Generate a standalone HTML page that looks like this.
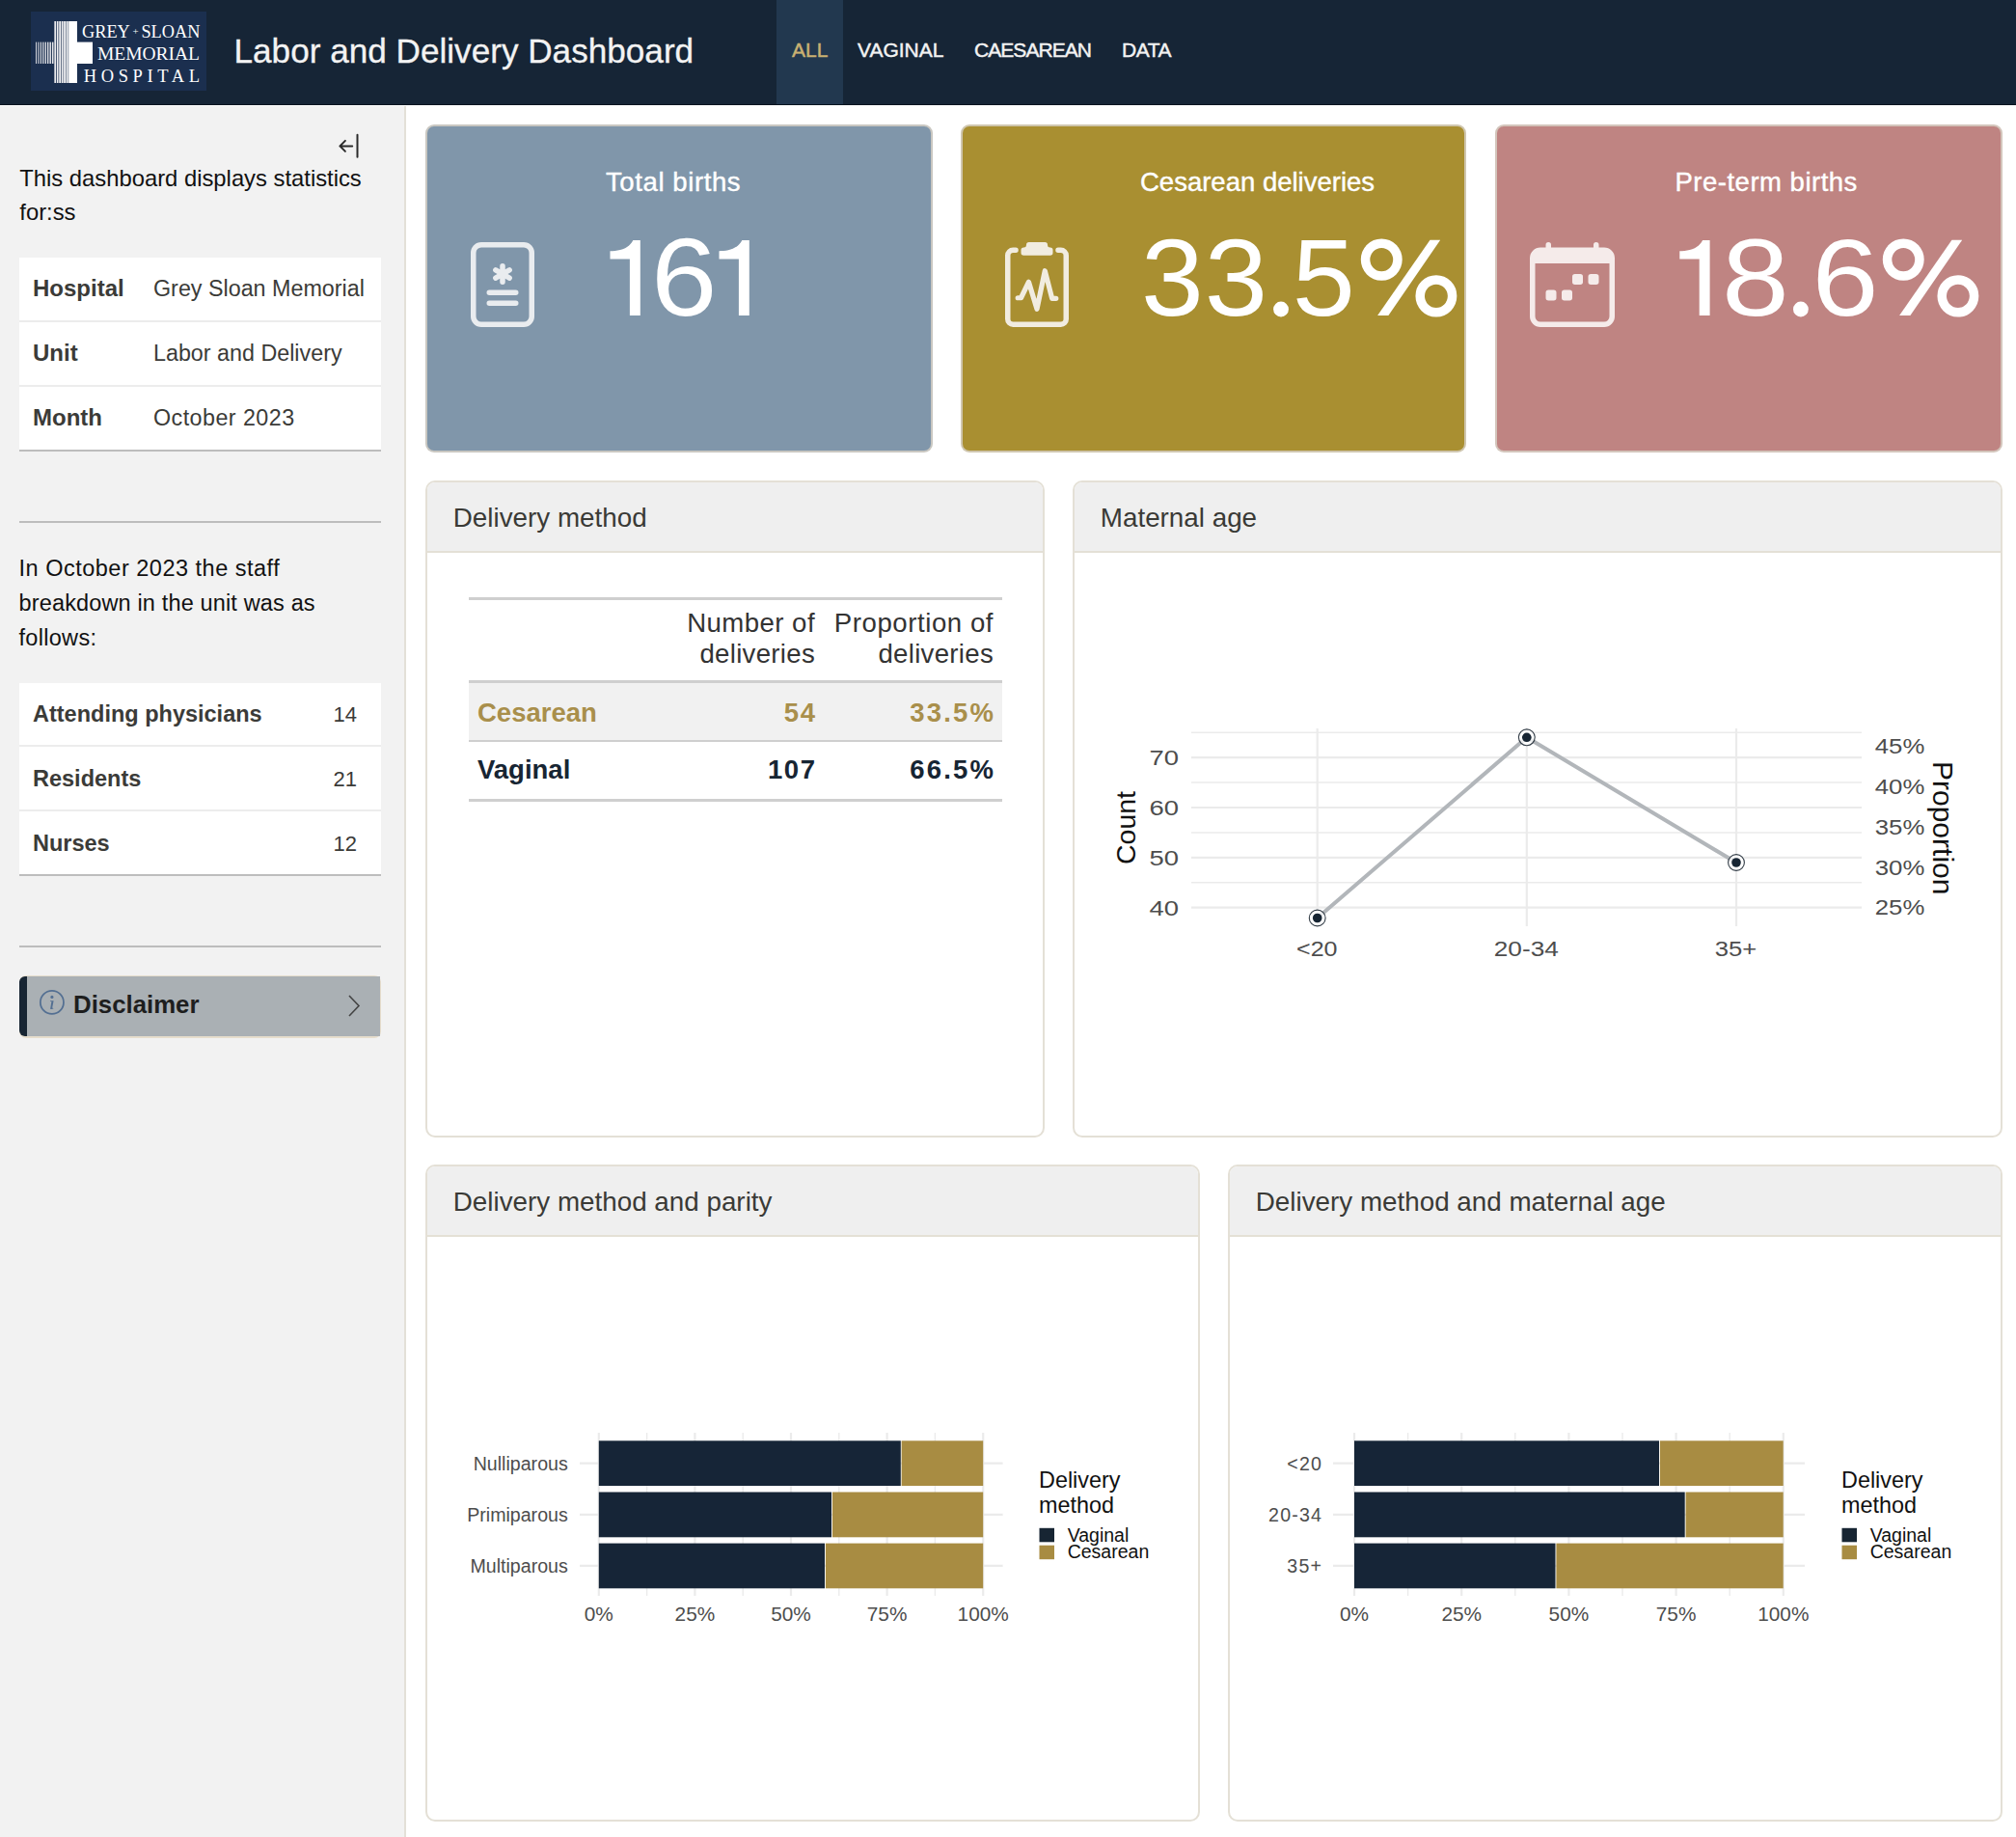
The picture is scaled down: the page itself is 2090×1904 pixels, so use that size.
<!DOCTYPE html>
<html><head><meta charset="utf-8">
<style>
*{box-sizing:border-box;margin:0;padding:0}
html,body{width:2090px;height:1904px;overflow:hidden;background:#fff;font-family:"Liberation Sans",sans-serif;position:relative}
.abs{position:absolute;white-space:nowrap}
#hdr{left:0;top:0;width:2090px;height:109px;background:#162536;border-bottom:1px solid #06131f}
#tab{left:805px;top:0;width:69px;height:108px;background:#22384f}
.nav{font-size:21px;color:#f3f3f3;line-height:1;-webkit-text-stroke:0.45px currentColor}
#side{left:0;top:110px;width:421px;height:1794px;background:#f2f2f2;border-right:2px solid #e3e0d8}
.st{font-size:23.5px;color:#111;line-height:1}
.tb{background:#fff}
.vb{border:2px solid rgba(214,208,198,0.85);border-radius:9px}
.card{border:2px solid #e4e0d6;border-radius:10px;background:#fff;overflow:hidden}
.chd{position:absolute;left:0;top:0;right:0;height:73px;background:#efefef;border-bottom:2px solid #e4e0d6}
.ctt{font-size:27.8px;color:#3a3a36;line-height:1}
.vt{font-size:27.5px;color:#fff;line-height:1;-webkit-text-stroke:0.4px #fff}
.vv{font-size:112px;color:#fff;line-height:1}
</style></head>
<body>
<div id="hdr" class="abs"></div>
<div id="tab" class="abs"></div>

<svg class="abs" style="left:32px;top:12px" width="182" height="82" viewBox="0 0 182 82">
<rect width="182" height="82" fill="#1b2f4f"/>
<rect x="5.00" y="31.6" width="0.90" height="22.4" fill="#e8e8ec"/>
<rect x="7.40" y="31.6" width="0.99" height="22.4" fill="#e8e8ec"/>
<rect x="9.81" y="31.6" width="1.08" height="22.4" fill="#e8e8ec"/>
<rect x="12.22" y="31.6" width="1.17" height="22.4" fill="#e8e8ec"/>
<rect x="14.64" y="31.6" width="1.26" height="22.4" fill="#e8e8ec"/>
<rect x="17.06" y="31.6" width="1.35" height="22.4" fill="#e8e8ec"/>
<rect x="19.49" y="31.6" width="1.44" height="22.4" fill="#e8e8ec"/>
<rect x="21.92" y="31.6" width="1.53" height="22.4" fill="#e8e8ec"/>
<rect x="24.36" y="10" width="1.62" height="64" fill="#f0f0f2"/>
<rect x="26.80" y="10" width="1.71" height="64" fill="#f0f0f2"/>
<rect x="29.25" y="10" width="1.80" height="64" fill="#f0f0f2"/>
<rect x="31.70" y="10" width="1.89" height="64" fill="#f0f0f2"/>
<rect x="34.15" y="10" width="1.98" height="64" fill="#f0f0f2"/>
<rect x="36.61" y="10" width="2.07" height="64" fill="#f0f0f2"/>
<rect x="39.08" y="10" width="2.16" height="64" fill="#f0f0f2"/>
<rect x="40" y="10" width="8" height="64" fill="#fff"/>
<rect x="40" y="31.6" width="24" height="22.4" fill="#fff"/>
<g fill="#fff" font-family="Liberation Serif" >
<text x="53" y="27" font-size="18.5" textLength="122.4" lengthAdjust="spacingAndGlyphs">GREY<tspan font-size="11" dy="-3"> + </tspan><tspan dy="3">SLOAN</tspan></text>
<text x="69" y="50" font-size="18.5" textLength="106" lengthAdjust="spacingAndGlyphs">MEMORIAL</text>
<text x="54.7" y="72.7" font-size="18.5" textLength="120.3" lengthAdjust="spacing">HOSPITAL</text>
</g></svg>
<div class="abs " style="left:242.5px;top:32.5px;font-size:35.15px;line-height:40.4px;color:#f3f3f3;-webkit-text-stroke:0.3px #f3f3f3">Labor and Delivery Dashboard</div>
<div class="abs nav" style="left:821.0px;top:40.3px;font-size:21px;line-height:24.1px;color:#c9b172;font-size:21px">ALL</div>
<div class="abs nav" style="left:889.0px;top:40.3px;font-size:21px;line-height:24.1px;font-size:21px">VAGINAL</div>
<div class="abs nav" style="left:1010.0px;top:40.3px;font-size:21px;line-height:24.1px;letter-spacing:-0.95px">CAESAREAN</div>
<div class="abs nav" style="left:1163.0px;top:40.3px;font-size:21px;line-height:24.1px;letter-spacing:-0.45px">DATA</div>
<div id="side" class="abs"></div>
<svg class="abs" style="left:350px;top:137px" width="26" height="28" viewBox="0 0 26 28">
<path d="M2.4 14.4 H15.2 M2.4 14.4 L7.9 8.9 M2.4 14.4 L7.9 19.9" stroke="#2b2b2b" stroke-width="2" fill="none" stroke-linecap="round" stroke-linejoin="round"/>
<path d="M20.5 2.8 V25.8" stroke="#2b2b2b" stroke-width="2" stroke-linecap="round"/></svg>
<div class="abs st" style="left:20.3px;top:170.5px;font-size:23.8px;line-height:27.4px;font-size:23.8px">This dashboard displays statistics</div>
<div class="abs st" style="left:20.3px;top:205.8px;font-size:23.8px;line-height:27.4px;font-size:23.8px">for:ss</div>
<div class="abs tb" style="left:20px;top:267px;width:375px;height:201px;border-bottom:2px solid #bdbdbd"></div>
<div class="abs" style="left:20px;top:332px;width:375px;height:2px;background:#ececec"></div>
<div class="abs" style="left:20px;top:399px;width:375px;height:2px;background:#ececec"></div>
<div class="abs " style="left:34.0px;top:285.3px;font-size:24px;line-height:27.6px;font-weight:bold;color:#3b3b38">Hospital</div>
<div class="abs " style="left:159.0px;top:285.9px;font-size:23.3px;line-height:26.8px;color:#3b3b38">Grey Sloan Memorial</div>
<div class="abs " style="left:34.0px;top:352.3px;font-size:24px;line-height:27.6px;font-weight:bold;color:#3b3b38">Unit</div>
<div class="abs " style="left:159.0px;top:352.9px;font-size:23.3px;line-height:26.8px;color:#3b3b38">Labor and Delivery</div>
<div class="abs " style="left:34.0px;top:419.3px;font-size:24px;line-height:27.6px;font-weight:bold;color:#3b3b38">Month</div>
<div class="abs " style="left:159.0px;top:419.9px;font-size:23.3px;line-height:26.8px;color:#3b3b38;letter-spacing:0.45px">October 2023</div>
<div class="abs" style="left:20px;top:540px;width:375px;height:2px;background:#bdbdbd"></div>
<div class="abs " style="left:19.5px;top:575.7px;font-size:23.5px;line-height:27.0px;color:#111;letter-spacing:0.5px">In October 2023 the staff</div>
<div class="abs " style="left:19.5px;top:611.7px;font-size:23.5px;line-height:27.0px;color:#111;letter-spacing:0.15px">breakdown in the unit was as</div>
<div class="abs " style="left:19.5px;top:647.7px;font-size:23.5px;line-height:27.0px;color:#111;letter-spacing:0.3px">follows:</div>
<div class="abs tb" style="left:20px;top:708px;width:375px;height:200px;border-bottom:2px solid #bdbdbd"></div>
<div class="abs" style="left:20px;top:772px;width:375px;height:2px;background:#ececec"></div>
<div class="abs" style="left:20px;top:839px;width:375px;height:2px;background:#ececec"></div>
<div class="abs " style="left:34.0px;top:726.7px;font-size:23.5px;line-height:27.0px;font-weight:bold;color:#3b3b38">Attending physicians</div>
<div class="abs " style="right:1720.0px;top:728.1px;font-size:22px;line-height:25.3px;text-align:right;color:#3b3b38">14</div>
<div class="abs " style="left:34.0px;top:793.7px;font-size:23.5px;line-height:27.0px;font-weight:bold;color:#3b3b38">Residents</div>
<div class="abs " style="right:1720.0px;top:795.1px;font-size:22px;line-height:25.3px;text-align:right;color:#3b3b38">21</div>
<div class="abs " style="left:34.0px;top:860.7px;font-size:23.5px;line-height:27.0px;font-weight:bold;color:#3b3b38">Nurses</div>
<div class="abs " style="right:1720.0px;top:862.1px;font-size:22px;line-height:25.3px;text-align:right;color:#3b3b38">12</div>
<div class="abs" style="left:20px;top:980px;width:375px;height:2px;background:#bdbdbd"></div>
<div class="abs" style="left:20px;top:1011px;width:375px;height:65px;background:#e6ddcc;border-radius:7px"></div>
<div class="abs" style="left:20px;top:1012px;width:374px;height:62px;background:#aab0b4;border-left:8px solid #172533;border-radius:6px 0 0 6px"></div>
<svg class="abs" style="left:40px;top:1025px" width="28" height="28" viewBox="0 0 28 28">
<circle cx="13.9" cy="13.9" r="12.05" stroke="#536f92" stroke-width="1.75" fill="none"/>
<circle cx="13.9" cy="8.4" r="1.55" fill="#536f92"/>
<path d="M12.1 12.2 H15.6 L14.2 19.6 Q14.8 20.1 15.4 19.9 L15.3 20.6 Q13.8 21.3 12.4 20.9 Q12.1 20.7 12.2 20.2 L13.4 13.1 L12 13.1 Z" fill="#536f92"/></svg>
<div class="abs " style="left:76.0px;top:1026.7px;font-size:25.8px;line-height:29.7px;font-weight:bold;color:#1e1e1e">Disclaimer</div>
<svg class="abs" style="left:358px;top:1030px" width="18" height="26" viewBox="0 0 18 26">
<path d="M4 2 L14 12.5 L4 23" stroke="#444" stroke-width="1.6" fill="none"/></svg>
<div class="abs vb" style="left:441px;top:129px;width:526px;height:340px;background:#8096aa"></div>
<svg class="abs" style="left:477px;top:250.5px" width="88" height="88" viewBox="0 0 16 16" fill="#e9ecef" stroke="#e9ecef" stroke-width="0"><path d="M8.5 4.5a.5.5 0 0 0-1 0v.634l-.549-.317a.5.5 0 1 0-.5.866L7 6l-.549.317a.5.5 0 1 0 .5.866l.549-.317V7.5a.5.5 0 1 0 1 0v-.634l.549.317a.5.5 0 1 0 .5-.866L9 6l.549-.317a.5.5 0 1 0-.5-.866l-.549.317zM5.5 9a.5.5 0 0 0 0 1h5a.5.5 0 0 0 0-1zm0 2a.5.5 0 0 0 0 1h5a.5.5 0 0 0 0-1z"/><path fill-rule="evenodd" d="M2 2a2 2 0 0 1 2-2h8a2 2 0 0 1 2 2v12a2 2 0 0 1-2 2H4a2 2 0 0 1-2-2zM4 1a1 1 0 0 0-1 1v12a1 1 0 0 0 1 1h8a1 1 0 0 0 1-1V2a1 1 0 0 0-1-1z"/></svg>
<div class="abs vt" style="left:628.0px;top:173.1px;font-size:27.5px;line-height:31.6px;letter-spacing:0.6px">Total births</div>
<svg class="abs" style="left:0;top:0" width="2090" height="400" viewBox="0 0 2090 400"><g fill="#fff" font-family="Liberation Sans"><path transform="translate(0,0)" d="M656.3 248.9H663.8V326.9H652.9V268.4H632.5V260.2C641 260.2 651.5 258.5 656.3 248.9Z"/><path transform="translate(113,0)" d="M656.3 248.9H663.8V326.9H652.9V268.4H632.5V260.2C641 260.2 651.5 258.5 656.3 248.9Z"/><text transform="translate(675.03,327.05) scale(1.0711,1)" font-size="114.83">6</text></g></svg>
<div class="abs vb" style="left:996px;top:129px;width:524px;height:340px;background:#a98f31"></div>
<svg class="abs" style="left:1031px;top:250.5px" width="88" height="88" viewBox="0 0 16 16" fill="#f1ece0" stroke="#f1ece0" stroke-width="0"><path d="M9.5 0a.5.5 0 0 1 .5.5.5.5 0 0 0 .5.5.5.5 0 0 1 .5.5V2a.5.5 0 0 1-.5.5h-5A.5.5 0 0 1 5 2v-.5a.5.5 0 0 1 .5-.5.5.5 0 0 0 .5-.5.5.5 0 0 1 .5-.5z"/><path d="M3 2.5a.5.5 0 0 1 .5-.5H4a.5.5 0 0 0 0-1h-.5A1.5 1.5 0 0 0 2 2.5v12A1.5 1.5 0 0 0 3.5 16h9a1.5 1.5 0 0 0 1.5-1.5v-12A1.5 1.5 0 0 0 12.5 1H12a.5.5 0 0 0 0 1h.5a.5.5 0 0 1 .5.5v12a.5.5 0 0 1-.5.5h-9a.5.5 0 0 1-.5-.5z"/><path d="M4.4 10.5H5L6.45 7.5L8 12.6L9.5 5.4L10.85 10.6H11.6" fill="none" stroke-width="0.95" stroke-linecap="round" stroke-linejoin="round"/></svg>
<div class="abs vt" style="left:1182.0px;top:173.1px;font-size:27.5px;line-height:31.6px;letter-spacing:0px">Cesarean deliveries</div>
<svg class="abs" style="left:0;top:0" width="2090" height="400" viewBox="0 0 2090 400"><g fill="#fff" font-family="Liberation Sans"><text transform="translate(1182.97,326.96) scale(1.0217,1)" font-size="113.98">3</text><text transform="translate(1248.84,326.96) scale(1.0291,1)" font-size="113.98">3</text><circle cx="1328" cy="320.5" r="7.9"/><text transform="translate(1339.82,326.96) scale(1.0300,1)" font-size="113.68">5</text><g transform="translate(-541,0)"><ellipse cx="1973.25" cy="269.1" rx="16.7" ry="16.95" fill="none" stroke="#fff" stroke-width="9.5"/><ellipse cx="2029.9" cy="306.85" rx="16.7" ry="16.95" fill="none" stroke="#fff" stroke-width="9.5"/><polygon points="2023.5,248.75 2034.2,248.75 1980.4,326.9 1969.1,326.9"/></g></g></svg>
<div class="abs vb" style="left:1550px;top:129px;width:526px;height:340px;background:#bf8482"></div>
<svg class="abs" style="left:1585.5px;top:250.5px" width="88" height="88" viewBox="0 0 16 16" fill="#f5ebea" stroke="#f5ebea" stroke-width="0"><path d="M11 6.5a.5.5 0 0 1 .5-.5h1a.5.5 0 0 1 .5.5v1a.5.5 0 0 1-.5.5h-1a.5.5 0 0 1-.5-.5zm-3 0a.5.5 0 0 1 .5-.5h1a.5.5 0 0 1 .5.5v1a.5.5 0 0 1-.5.5h-1a.5.5 0 0 1-.5-.5zm-5 3a.5.5 0 0 1 .5-.5h1a.5.5 0 0 1 .5.5v1a.5.5 0 0 1-.5.5h-1a.5.5 0 0 1-.5-.5zm3 0a.5.5 0 0 1 .5-.5h1a.5.5 0 0 1 .5.5v1a.5.5 0 0 1-.5.5h-1a.5.5 0 0 1-.5-.5z"/><path fill-rule="evenodd" d="M3.5 0a.5.5 0 0 1 .5.5V1h8V.5a.5.5 0 0 1 1 0V1h1a2 2 0 0 1 2 2v11a2 2 0 0 1-2 2H2a2 2 0 0 1-2-2V3a2 2 0 0 1 2-2h1V.5a.5.5 0 0 1 .5-.5M1 4v10a1 1 0 0 0 1 1h12a1 1 0 0 0 1-1V4z"/></svg>
<div class="abs vt" style="left:1736.5px;top:173.1px;font-size:27.5px;line-height:31.6px;letter-spacing:0.5px">Pre-term births</div>
<svg class="abs" style="left:0;top:0" width="2090" height="400" viewBox="0 0 2090 400"><g fill="#fff" font-family="Liberation Sans"><path transform="translate(1108.8,0)" d="M656.3 248.9H663.8V326.9H652.9V268.4H632.5V260.2C641 260.2 651.5 258.5 656.3 248.9Z"/><text transform="translate(1784.90,326.96) scale(1.1013,1)" font-size="113.98">8</text><circle cx="1866.9" cy="320.5" r="7.9"/><text transform="translate(1878.56,326.96) scale(1.0905,1)" font-size="113.98">6</text><g transform="translate(0,0)"><ellipse cx="1973.25" cy="269.1" rx="16.7" ry="16.95" fill="none" stroke="#fff" stroke-width="9.5"/><ellipse cx="2029.9" cy="306.85" rx="16.7" ry="16.95" fill="none" stroke="#fff" stroke-width="9.5"/><polygon points="2023.5,248.75 2034.2,248.75 1980.4,326.9 1969.1,326.9"/></g></g></svg>
<div class="abs card" style="left:441px;top:498px;width:642px;height:681px"><div class="chd"></div></div>
<div class="abs ctt" style="left:469.8px;top:520.6px;font-size:27.8px;line-height:32.0px;">Delivery method</div>
<div class="abs card" style="left:1112px;top:498px;width:964px;height:681px"><div class="chd"></div></div>
<div class="abs ctt" style="left:1140.8px;top:520.6px;font-size:27.8px;line-height:32.0px;">Maternal age</div>
<div class="abs card" style="left:441px;top:1207px;width:803px;height:681px"><div class="chd"></div></div>
<div class="abs ctt" style="left:469.8px;top:1229.6px;font-size:27.8px;line-height:32.0px;">Delivery method and parity</div>
<div class="abs card" style="left:1273px;top:1207px;width:803px;height:681px"><div class="chd"></div></div>
<div class="abs ctt" style="left:1301.8px;top:1229.6px;font-size:27.8px;line-height:32.0px;">Delivery method and maternal age</div>
<div class="abs" style="left:486px;top:619px;width:553px;height:3px;background:#cfcfcf"></div>
<div class="abs " style="right:1245.0px;top:630.4px;font-size:27.6px;line-height:31.7px;text-align:right;color:#333;letter-spacing:0.45px">Number of</div>
<div class="abs " style="right:1245.0px;top:662.4px;font-size:27.6px;line-height:31.7px;text-align:right;color:#333;letter-spacing:0.3px">deliveries</div>
<div class="abs " style="right:1060.0px;top:630.4px;font-size:27.6px;line-height:31.7px;text-align:right;color:#333;letter-spacing:0.55px">Proportion of</div>
<div class="abs " style="right:1060.0px;top:662.4px;font-size:27.6px;line-height:31.7px;text-align:right;color:#333;letter-spacing:0.3px">deliveries</div>
<div class="abs" style="left:486px;top:705px;width:553px;height:3px;background:#cfcfcf"></div>
<div class="abs" style="left:486px;top:708px;width:553px;height:59px;background:#f1f1f1"></div>
<div class="abs" style="left:486px;top:767px;width:553px;height:2px;background:#cfcfcf"></div>
<div class="abs" style="left:486px;top:828px;width:553px;height:3px;background:#cfcfcf"></div>
<div class="abs " style="left:495.0px;top:722.6px;font-size:27.5px;line-height:31.6px;font-weight:bold;color:#a98f4b">Cesarean</div>
<div class="abs " style="right:1245.0px;top:722.6px;font-size:27.5px;line-height:31.6px;text-align:right;font-weight:bold;color:#a98f4b;letter-spacing:1.6px;margin-right:-1.6px">54</div>
<div class="abs " style="right:1060.0px;top:722.6px;font-size:27.5px;line-height:31.6px;text-align:right;font-weight:bold;color:#a98f4b;letter-spacing:2.2px;margin-right:-2.2px">33.5%</div>
<div class="abs " style="left:495.0px;top:782.1px;font-size:27.5px;line-height:31.6px;font-weight:bold;color:#172533">Vaginal</div>
<div class="abs " style="right:1245.0px;top:782.1px;font-size:27.5px;line-height:31.6px;text-align:right;font-weight:bold;color:#172533;letter-spacing:1.6px;margin-right:-1.6px">107</div>
<div class="abs " style="right:1060.0px;top:782.1px;font-size:27.5px;line-height:31.6px;text-align:right;font-weight:bold;color:#172533;letter-spacing:2.2px;margin-right:-2.2px">66.5%</div>
<svg class="abs" style="left:0;top:0" width="2090" height="1904" viewBox="0 0 2090 1904" font-family="Liberation Sans"><line x1="1235" x2="1930" y1="759.2" y2="759.2" stroke="#ebebeb" stroke-width="1.4"/>
<line x1="1235" x2="1930" y1="811" y2="811" stroke="#ebebeb" stroke-width="1.4"/>
<line x1="1235" x2="1930" y1="863" y2="863" stroke="#ebebeb" stroke-width="1.4"/>
<line x1="1235" x2="1930" y1="914.7" y2="914.7" stroke="#ebebeb" stroke-width="1.4"/>
<line x1="1235" x2="1930" y1="785.2" y2="785.2" stroke="#ebebeb" stroke-width="2.2"/>
<line x1="1235" x2="1930" y1="837" y2="837" stroke="#ebebeb" stroke-width="2.2"/>
<line x1="1235" x2="1930" y1="888.8" y2="888.8" stroke="#ebebeb" stroke-width="2.2"/>
<line x1="1235" x2="1930" y1="940.7" y2="940.7" stroke="#ebebeb" stroke-width="2.2"/>
<line x1="1365.7" x2="1365.7" y1="755" y2="960" stroke="#ebebeb" stroke-width="2.2"/>
<line x1="1582.8" x2="1582.8" y1="755" y2="960" stroke="#ebebeb" stroke-width="2.2"/>
<line x1="1800" x2="1800" y1="755" y2="960" stroke="#ebebeb" stroke-width="2.2"/>
<polyline points="1365.7,951.5 1582.8,764.3 1800,894" fill="none" stroke="#b2b6ba" stroke-width="4" stroke-linejoin="round"/>
<circle cx="1365.7" cy="951.5" r="8.4" fill="rgba(255,255,255,0.75)" stroke="#333d47" stroke-width="1.1"/>
<circle cx="1365.7" cy="951.5" r="4.8" fill="#172533"/>
<circle cx="1582.8" cy="764.3" r="8.4" fill="rgba(255,255,255,0.75)" stroke="#333d47" stroke-width="1.1"/>
<circle cx="1582.8" cy="764.3" r="4.8" fill="#172533"/>
<circle cx="1800" cy="894" r="8.4" fill="rgba(255,255,255,0.75)" stroke="#333d47" stroke-width="1.1"/>
<circle cx="1800" cy="894" r="4.8" fill="#172533"/>
<text x="1191.5" y="793.2" font-size="22.5" textLength="30.5" lengthAdjust="spacingAndGlyphs" fill="#4d4d4d">70</text>
<text x="1191.5" y="845" font-size="22.5" textLength="30.5" lengthAdjust="spacingAndGlyphs" fill="#4d4d4d">60</text>
<text x="1191.5" y="896.8" font-size="22.5" textLength="30.5" lengthAdjust="spacingAndGlyphs" fill="#4d4d4d">50</text>
<text x="1191.5" y="948.7" font-size="22.5" textLength="30.5" lengthAdjust="spacingAndGlyphs" fill="#4d4d4d">40</text>
<text x="1943.8" y="781" font-size="22.5" textLength="51.5" lengthAdjust="spacingAndGlyphs" fill="#4d4d4d">45%</text>
<text x="1943.8" y="823" font-size="22.5" textLength="51.5" lengthAdjust="spacingAndGlyphs" fill="#4d4d4d">40%</text>
<text x="1943.8" y="864.8" font-size="22.5" textLength="51.5" lengthAdjust="spacingAndGlyphs" fill="#4d4d4d">35%</text>
<text x="1943.8" y="906.6" font-size="22.5" textLength="51.5" lengthAdjust="spacingAndGlyphs" fill="#4d4d4d">30%</text>
<text x="1943.8" y="948.4" font-size="22.5" textLength="51.5" lengthAdjust="spacingAndGlyphs" fill="#4d4d4d">25%</text>
<text x="1344.0" y="990.8" font-size="22.5" textLength="42.5" lengthAdjust="spacingAndGlyphs" fill="#4d4d4d">&lt;20</text>
<text x="1548.8" y="990.8" font-size="22.5" textLength="67" lengthAdjust="spacingAndGlyphs" fill="#4d4d4d">20-34</text>
<text x="1777.8" y="990.8" font-size="22.5" textLength="43.5" lengthAdjust="spacingAndGlyphs" fill="#4d4d4d">35+</text>
<text transform="translate(1177,858) rotate(-90)" text-anchor="middle" font-size="28.5" fill="#111">Count</text>
<text transform="translate(2003.5,858.2) rotate(90)" text-anchor="middle" font-size="30" fill="#111">Proportion</text>
<line x1="601" x2="1039.6" y1="1516.7" y2="1516.7" stroke="#ebebeb" stroke-width="2.2"/>
<line x1="601" x2="1039.6" y1="1569.9" y2="1569.9" stroke="#ebebeb" stroke-width="2.2"/>
<line x1="601" x2="1039.6" y1="1622.9" y2="1622.9" stroke="#ebebeb" stroke-width="2.2"/>
<line x1="620.8" x2="620.8" y1="1485" y2="1654" stroke="#ebebeb" stroke-width="2.2"/>
<line x1="670.6" x2="670.6" y1="1485" y2="1654" stroke="#ebebeb" stroke-width="1.4"/>
<line x1="720.4" x2="720.4" y1="1485" y2="1654" stroke="#ebebeb" stroke-width="2.2"/>
<line x1="770.2" x2="770.2" y1="1485" y2="1654" stroke="#ebebeb" stroke-width="1.4"/>
<line x1="820.0" x2="820.0" y1="1485" y2="1654" stroke="#ebebeb" stroke-width="2.2"/>
<line x1="869.8" x2="869.8" y1="1485" y2="1654" stroke="#ebebeb" stroke-width="1.4"/>
<line x1="919.6" x2="919.6" y1="1485" y2="1654" stroke="#ebebeb" stroke-width="2.2"/>
<line x1="969.4" x2="969.4" y1="1485" y2="1654" stroke="#ebebeb" stroke-width="1.4"/>
<line x1="1019.2" x2="1019.2" y1="1485" y2="1654" stroke="#ebebeb" stroke-width="2.2"/>
<rect x="620.8" y="1493.3" width="313.0" height="46.7" fill="#162537"/>
<rect x="934.6" y="1493.3" width="84.6" height="46.7" fill="#a88c42"/>
<rect x="620.8" y="1546.5" width="241.2" height="46.8" fill="#162537"/>
<rect x="862.9" y="1546.5" width="156.3" height="46.8" fill="#a88c42"/>
<rect x="620.8" y="1599.6" width="234.2" height="46.7" fill="#162537"/>
<rect x="855.9" y="1599.6" width="163.3" height="46.7" fill="#a88c42"/>
<text x="588.75" y="1523.7" text-anchor="end" font-size="19.6" letter-spacing="0" fill="#4d4d4d">Nulliparous</text>
<text x="588.75" y="1576.9" text-anchor="end" font-size="19.6" letter-spacing="0" fill="#4d4d4d">Primiparous</text>
<text x="588.75" y="1629.9" text-anchor="end" font-size="19.6" letter-spacing="0" fill="#4d4d4d">Multiparous</text>
<text x="620.8" y="1679.6" text-anchor="middle" font-size="20.8" fill="#4d4d4d">0%</text>
<text x="720.4" y="1679.6" text-anchor="middle" font-size="20.8" fill="#4d4d4d">25%</text>
<text x="820.0" y="1679.6" text-anchor="middle" font-size="20.8" fill="#4d4d4d">50%</text>
<text x="919.6" y="1679.6" text-anchor="middle" font-size="20.8" fill="#4d4d4d">75%</text>
<text x="1019.2" y="1679.6" text-anchor="middle" font-size="20.8" fill="#4d4d4d">100%</text>
<text x="1077" y="1542" font-size="23.4" fill="#111">Delivery</text>
<text x="1077" y="1567.5" font-size="23.4" fill="#111">method</text>
<rect x="1077.5" y="1583.8" width="15.5" height="14.5" fill="#172533"/>
<rect x="1077.5" y="1601.7" width="15.5" height="14.5" fill="#a88c42"/>
<text x="1106.7" y="1597.5" font-size="19.5" fill="#111">Vaginal</text>
<text x="1106.7" y="1615.3" font-size="19.5" fill="#111">Cesarean</text>
<line x1="1382" x2="1871" y1="1516.7" y2="1516.7" stroke="#ebebeb" stroke-width="2.2"/>
<line x1="1382" x2="1871" y1="1569.9" y2="1569.9" stroke="#ebebeb" stroke-width="2.2"/>
<line x1="1382" x2="1871" y1="1622.9" y2="1622.9" stroke="#ebebeb" stroke-width="2.2"/>
<line x1="1404.0" x2="1404.0" y1="1485" y2="1654" stroke="#ebebeb" stroke-width="2.2"/>
<line x1="1459.6" x2="1459.6" y1="1485" y2="1654" stroke="#ebebeb" stroke-width="1.4"/>
<line x1="1515.2" x2="1515.2" y1="1485" y2="1654" stroke="#ebebeb" stroke-width="2.2"/>
<line x1="1570.8" x2="1570.8" y1="1485" y2="1654" stroke="#ebebeb" stroke-width="1.4"/>
<line x1="1626.4" x2="1626.4" y1="1485" y2="1654" stroke="#ebebeb" stroke-width="2.2"/>
<line x1="1682.0" x2="1682.0" y1="1485" y2="1654" stroke="#ebebeb" stroke-width="1.4"/>
<line x1="1737.6" x2="1737.6" y1="1485" y2="1654" stroke="#ebebeb" stroke-width="2.2"/>
<line x1="1793.2" x2="1793.2" y1="1485" y2="1654" stroke="#ebebeb" stroke-width="1.4"/>
<line x1="1848.8" x2="1848.8" y1="1485" y2="1654" stroke="#ebebeb" stroke-width="2.2"/>
<rect x="1404" y="1493.3" width="316.0" height="46.7" fill="#162537"/>
<rect x="1720.9" y="1493.3" width="127.8" height="46.7" fill="#a88c42"/>
<rect x="1404" y="1546.5" width="342.7" height="46.8" fill="#162537"/>
<rect x="1747.6" y="1546.5" width="101.1" height="46.8" fill="#a88c42"/>
<rect x="1404" y="1599.6" width="208.5" height="46.7" fill="#162537"/>
<rect x="1613.4" y="1599.6" width="235.3" height="46.7" fill="#a88c42"/>
<text x="1371.2" y="1523.7" text-anchor="end" font-size="19.6" letter-spacing="1.2" fill="#4d4d4d">&lt;20</text>
<text x="1371.2" y="1576.9" text-anchor="end" font-size="19.6" letter-spacing="1.2" fill="#4d4d4d">20-34</text>
<text x="1371.2" y="1629.9" text-anchor="end" font-size="19.6" letter-spacing="1.2" fill="#4d4d4d">35+</text>
<text x="1404.0" y="1679.6" text-anchor="middle" font-size="20.8" fill="#4d4d4d">0%</text>
<text x="1515.2" y="1679.6" text-anchor="middle" font-size="20.8" fill="#4d4d4d">25%</text>
<text x="1626.4" y="1679.6" text-anchor="middle" font-size="20.8" fill="#4d4d4d">50%</text>
<text x="1737.6" y="1679.6" text-anchor="middle" font-size="20.8" fill="#4d4d4d">75%</text>
<text x="1848.8" y="1679.6" text-anchor="middle" font-size="20.8" fill="#4d4d4d">100%</text>
<text x="1909" y="1542" font-size="23.4" fill="#111">Delivery</text>
<text x="1909" y="1567.5" font-size="23.4" fill="#111">method</text>
<rect x="1909.5" y="1583.8" width="15.5" height="14.5" fill="#172533"/>
<rect x="1909.5" y="1601.7" width="15.5" height="14.5" fill="#a88c42"/>
<text x="1938.7" y="1597.5" font-size="19.5" fill="#111">Vaginal</text>
<text x="1938.7" y="1615.3" font-size="19.5" fill="#111">Cesarean</text></svg>
</body></html>
